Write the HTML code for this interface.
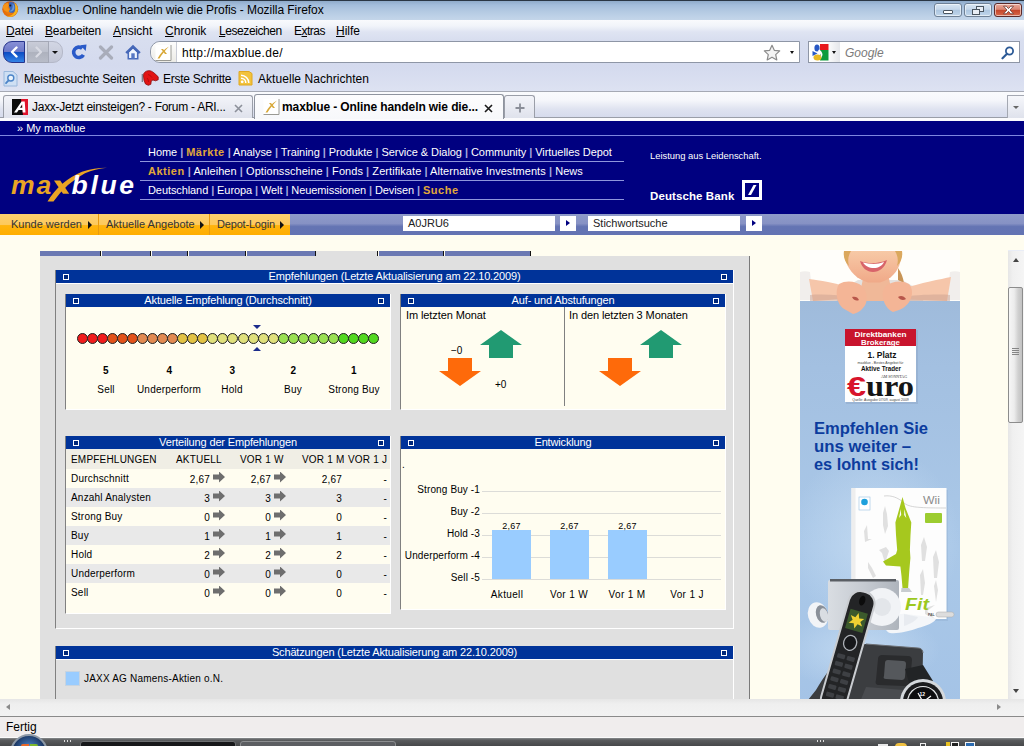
<!DOCTYPE html>
<html lang="de">
<head>
<meta charset="utf-8">
<title>maxblue - Online handeln wie die Profis - Mozilla Firefox</title>
<style>
*{box-sizing:border-box;margin:0;padding:0}
html,body{width:1024px;height:746px;overflow:hidden;background:#e9edf7}
body{position:relative;font-family:"Liberation Sans","DejaVu Sans",sans-serif;font-size:12px;color:#000}
.abs{position:absolute}
.ui{font-family:"DejaVu Sans Condensed","DejaVu Sans","Liberation Sans",sans-serif;font-size:12px;color:#000;white-space:nowrap}
/* ---------- browser chrome ---------- */
#titlebar{left:0;top:0;width:1024px;height:20px;background:linear-gradient(#8fabca 0,#a3bddb 4px,#b3c9e2 10px,#bfd2e8 16px,#c6d7ea 20px);border-top:1px solid #2a3644}
#menubar{left:0;top:20px;width:1024px;height:20px;background:linear-gradient(#f9fafd 0,#f1f4fa 30%,#dfe4f2 60%,#d8deef 100%)}
#navbar{left:0;top:40px;width:1024px;height:26px;background:linear-gradient(#d8deef,#d4daee)}
#bookbar{left:0;top:66px;width:1024px;height:26px;background:linear-gradient(#d4daee,#dde2f2);border-bottom:1px solid #a5a9b4}
#tabbar{left:0;top:92px;width:1024px;height:29px;background:linear-gradient(#fafbfd 0,#f6f7fb 8px,#dfe3f0 17px,#d6dbec 25px)}

#titlebar .ttl{left:27px;top:2px;font-size:12px;line-height:15px;letter-spacing:-0.05px}
.wbtn{top:2px;height:14px;border:1px solid #6f8196;border-radius:3px;background:linear-gradient(#d9e6f3 0,#c5d7ea 45%,#adc6e0 50%,#c0d5ea 100%);box-shadow:inset 0 0 0 1px rgba(255,255,255,.55)}
.wbtn.close{border-color:#5b2a2a;background:linear-gradient(#e9a99b 0,#d98572 45%,#c4452a 50%,#d9694b 100%)}
#menubar span{position:absolute;top:2.5px;line-height:16px;font-size:12px}
#menubar u{text-decoration:underline;text-underline-offset:1px}
#urlbar{left:150px;top:41px;width:650px;height:22px;background:#fff;border:1px solid #8e96a6;border-radius:10px 0 0 10px}
#urlbar .idbox{left:0;top:0;width:26px;height:20px;border-right:1px solid #c9ccd6;border-radius:10px 0 0 10px;background:linear-gradient(#fdfdfd,#ecebe6)}
#searchbar{left:808px;top:41px;width:212px;height:22px;background:#fff;border:1px solid #8e96a6}
#bookbar span{position:absolute;top:5px;line-height:16px;font-size:12px}
.tab{top:3px;height:23px;border:1px solid #9a9ea8;border-bottom:none;border-radius:3px 3px 0 0;background:linear-gradient(#f3f4f9,#dfe2ec)}
.tab.active{top:2px;height:25px;background:linear-gradient(#fdfdfe,#f7f8fb);border-color:#8f949f}
.tab .lbl{position:absolute;top:3px;line-height:16px;font-size:12px;white-space:nowrap}
/* ---------- page ---------- */
#topframe{left:0;top:121px;width:1024px;height:129px;background:#fffdf0}
#hdr{left:0;top:0;width:1024px;height:93px;background:#000080}

.pg{font-family:"Liberation Sans",sans-serif;white-space:nowrap}
#hdr .nav{position:absolute;left:148px;font-size:11px;line-height:13px;color:#fff;letter-spacing:.02px}
#hdr .nav i{font-style:normal;color:#a6aade;font-weight:bold}
#hdr .nav b{color:#e0a83a;letter-spacing:.5px}
#hdr .ln{position:absolute;left:140px;width:484px;height:1px;background:#8f96dc}
#obar{left:0;top:93px;width:290px;height:21px;background:linear-gradient(#fdd070 0,#fdc95c 50%,#ffb40e 55%,#ffae00 100%)}
#obar span{position:absolute;top:3.5px;font-size:11px;line-height:13px;color:#333}
#obar .d{position:absolute;top:0;width:1px;height:21px;background:#e89a10}
#obar .a{position:absolute;top:6.5px;width:0;height:0;border:4px solid transparent;border-left:4.5px solid #111;border-right:none}
#gbar{left:290px;top:93px;width:734px;height:21px;background:linear-gradient(#8e9ac9 0,#8792c4 45%,#6474b3 60%,#6373b3 100%)}
.inp{position:absolute;top:2px;height:15px;background:#fff;font-size:11px;line-height:15px;padding-left:5px;color:#222}
.gobtn{position:absolute;top:2px;width:16px;height:15px;background:#fff}
.gobtn:after{content:"";position:absolute;left:6px;top:4px;border:3.5px solid transparent;border-left:4px solid #000080;border-right:none}
/* main frame */
.tabseg{position:absolute;top:1px;height:5px;background:#6b79b3;border-right:1px solid #111}
#grey{left:40px;top:6px;width:710px;height:443px;background:#e0e0e0;border-right:1px solid #7a7a7a}
.box{position:absolute;border-left:1px solid #808080;border-right:1px solid #fff;border-bottom:1px solid #fff}
.bh{position:absolute;left:0;top:0;right:0;height:13px;background:#003399;color:#fff;font-size:11px;line-height:13px;text-align:center;letter-spacing:-.15px}
.bh:before,.bh:after{content:"";position:absolute;top:4px;width:4px;height:4px;border:1px solid #fff;background:#00287a}
.bh:before{left:7px}.bh:after{right:6px}
.cream{background:#fffdf0}
.t10{font-size:10px;letter-spacing:.2px;line-height:12px;position:absolute}

.dots{position:absolute;left:0;top:39px;height:11px}
.dots i{position:absolute;top:0;width:11px;height:11px;border-radius:50%;border:1px solid #222}
.mk{position:absolute;width:0;height:0;border:4px solid transparent}
.mk.dn{border-top:4.5px solid #1c2c8c;border-bottom:none}
.mk.up{border-bottom:4.5px solid #1c2c8c;border-top:none}
.t10.c{transform:translateX(-50%)}
.tr{position:absolute;left:0;right:0;height:19px;font-size:10px;letter-spacing:.2px}
.tr span{position:absolute;top:4px;line-height:12px}
.tr span.r{top:5px}
.tr .ar{position:absolute;top:2.5px;width:12px;height:11px;background:#6e6e6e;clip-path:polygon(0 27%,50% 27%,50% 0,100% 50%,50% 100%,50% 73%,0 73%)}
#mainframe{left:0;top:250px;width:1008px;height:449px;background:#fffdf0;overflow:hidden}
</style>
</head>
<body>

<div id="titlebar" class="abs">
  <svg class="abs" style="left:1px;top:0px" width="19" height="18" viewBox="0 0 19 18"><defs><radialGradient id="ffg" cx=".45" cy=".55" r=".6"><stop offset="0" stop-color="#f08a14"/><stop offset=".7" stop-color="#e46a0a"/><stop offset="1" stop-color="#b84a0a"/></radialGradient></defs><circle cx="9.200" cy="8.200" r="7.900" fill="url(#ffg)"/><path d="M8.500 1.200c3.500-.6 6.300 1.200 7 4.300.5 2.500-.8 5-3 6-2 .8-4.300.2-5-1.500 1-.3 1.500-1.300 1.200-2.500-.3-1.300-1.300-2-1.200-3.300.1-1.300.5-2.300 1-3z" fill="#3a66b8"/><path d="M11.500 2.500c1.500 1 2.300 3 1.800 5-.4 1.500-1.500 2.600-3 3-1 .2-2-.1-2.500-.8 1.500.2 2.700-.5 3.300-1.800.7-1.700.7-3.700.4-5.400z" fill="#6a9ad8"/><path d="M13.200 1.800c2.500 1.500 3.900 4.200 3.600 7-.4 3.600-3.300 6.500-7 6.900-1.500.1-3-.2-4.200-.9 3.500.6 7-1.300 8.200-4.600.9-2.700.5-5.800-.6-8.400z" fill="#f6b21c"/><path d="M2 5c1-1.800 2.800-3 4.800-3.300L8 4.500 6.500 7l2 1.500-1 2.500c-2 0-4-1-5-2.700C2 7.300 1.800 6 2 5z" fill="#f49418"/><circle cx="9.300" cy="4.600" r="1" fill="#1a1a2a"/></svg>
  <span class="abs ui ttl" style="font-family:'Liberation Sans',sans-serif">maxblue - Online handeln wie die Profis - Mozilla Firefox</span>
  <div class="abs wbtn" style="left:934px;width:28px"><div class="abs" style="left:8px;top:6px;width:10px;height:4px;border:1px solid #4a5560;background:#fff;border-radius:1px"></div></div>
  <div class="abs wbtn" style="left:964px;width:28px"><div class="abs" style="left:11px;top:2px;width:8px;height:6px;border:1px solid #4a5560;background:#e8eef5"></div><div class="abs" style="left:7px;top:5px;width:8px;height:6px;border:1px solid #4a5560;background:#e8eef5"></div></div>
  <div class="abs wbtn close" style="left:994px;width:28px"><svg class="abs" style="left:7px;top:1px" width="13" height="10" viewBox="0 0 13 10"><path d="M1.500 1.200h2.800L6.500 3.600 8.700 1.200h2.800L8 5l3.500 3.800H8.700L6.500 6.400 4.300 8.800H1.500L5 5z" fill="#fff" stroke="#6a3a34" stroke-width=".8"/></svg></div>
</div>
<div id="menubar" class="abs ui" style="font-family:'Liberation Sans',sans-serif">
  <span style="left:6px;letter-spacing:-.15px"><u>D</u>atei</span>
  <span style="left:45px;letter-spacing:-.2px"><u>B</u>earbeiten</span>
  <span style="left:113px"><u>A</u>nsicht</span>
  <span style="left:165px"><u>C</u>hronik</span>
  <span style="left:219px;letter-spacing:-.42px"><u>L</u>esezeichen</span>
  <span style="left:294px;letter-spacing:-.5px">E<u>x</u>tras</span>
  <span style="left:336px"><u>H</u>ilfe</span>
</div>
<div id="navbar" class="abs">
  <div class="abs" style="left:3px;top:1px;width:22px;height:22px;border:1px solid #26348c;border-radius:9px 0 0 9px;background:linear-gradient(#8890d6 0,#6c78c8 48%,#0c4cc4 52%,#3484e6 100%)"><svg class="abs" style="left:5px;top:4px" width="11" height="12" viewBox="0 0 11 12"><path d="M7.500 1.500L3 6l4.500 4.500" fill="none" stroke="#fff" stroke-width="2.400" stroke-linecap="round" stroke-linejoin="round"/></svg></div>
  <div class="abs" style="left:27px;top:1px;width:36px;height:22px;border:1px solid #b4b8c8;border-radius:0 10px 10px 0;background:linear-gradient(#d2d6e4,#c2c6d6)"></div>
  <div class="abs" style="left:27px;top:1px;width:22px;height:22px;border:1px solid #a4a8b6;background:linear-gradient(#c9ccd8 0,#bcc0cc 48%,#aeb2be 52%,#b8bcc8 100%)"><svg class="abs" style="left:5px;top:4px" width="11" height="12" viewBox="0 0 11 12"><path d="M3.500 1.500L8 6l-4.500 4.500" fill="none" stroke="#d9dbe4" stroke-width="2.200" stroke-linecap="round" stroke-linejoin="round"/></svg></div>
  <i class="abs" style="left:52px;top:11px;border:3px solid transparent;border-top:3.500px solid #111;border-bottom:none"></i>
  <svg class="abs" style="left:71px;top:4px" width="17" height="16" viewBox="0 0 17 16"><path d="M12.400 10.800A5.200 5.200 0 1 1 11.200 4.300" fill="none" stroke="#2a5ac8" stroke-width="3.600"/><path d="M9.200 1.200l6.300-.7L14.700 7z" fill="#2a5ac8"/></svg>
  <svg class="abs" style="left:98px;top:5px" width="16" height="15" viewBox="0 0 16 15"><path d="M2.500 2l11 11M13.500 2l-11 11" stroke="#a9adba" stroke-width="3.200" stroke-linecap="round"/></svg>
  <svg class="abs" style="left:125px;top:4px" width="16" height="16" viewBox="0 0 16 16"><path d="M3.300 8v6.700h9.400V8L8 3.500z" fill="#f2f7ff" stroke="#4a6cbc" stroke-width="1.600"/><path d="M.3 8.300L8 .8l7.700 7.500-1.900 1.700L8 4.600 2.200 10z" fill="#4668b8"/><rect x="6.300" y="9.300" width="3.400" height="5.400" fill="#5878c4"/></svg>
</div>
<div id="urlbar" class="abs"><div class="abs idbox"><svg class="abs" style="left:4px;top:2.500px" width="17" height="16" viewBox="0 0 17 16"><rect x=".5" y="0" width="15.500" height="15" fill="#fff"/><path d="M16 0v15.500H.5" fill="none" stroke="#9a9a94" stroke-width="1"/><path d="M2.500 13.500C5.500 8 9 4.500 14 1.500 10.500 5 7 9 4.500 13.500z" fill="#d8a838"/><path d="M6 4l2 0 4 5-2 0z" fill="#d8a838"/></svg></div><span class="abs ui" style="left:31px;top:3.500px;line-height:15px;font-family:'Liberation Sans',sans-serif;letter-spacing:.3px">http://maxblue.de/</span>
  <svg class="abs" style="left:612px;top:2px" width="18" height="17" viewBox="0 0 18 17"><path d="M9 1.300l2.300 5 5.400.6-4 3.700 1.100 5.300L9 13.200l-4.800 2.700 1.100-5.300-4-3.700 5.400-.6z" fill="#f4f4f4" stroke="#8a8a8a" stroke-width="1.200" stroke-linejoin="round"/></svg>
  <i class="abs" style="left:638.500px;top:9px;border:2.500px solid transparent;border-top:3px solid #111;border-bottom:none"></i>
</div>
<div id="searchbar" class="abs"><div class="abs" style="left:0;top:0;width:31px;height:20px;background:linear-gradient(90deg,#fff 0,#fff 55%,#e4e6ea 100%)"></div>
  <svg class="abs" style="left:3px;top:2px" width="17" height="17" viewBox="0 0 17 17"><rect x="8" y="0" width="8.500" height="6" fill="#e8181c"/><rect x="8" y="6" width="8.500" height="10.500" fill="#0c9c3c"/><path d="M8 0h3v6l3 4v6.500H8z" fill="#0c9c3c" opacity="0"/><ellipse cx="5" cy="4" rx="2.600" ry="3.600" fill="#2858c4"/><path d="M.5 7l5 2.500-5 2.500z" fill="#2858c4"/><ellipse cx="5.500" cy="13.500" rx="4" ry="3" fill="#e8b820"/><path d="M7 5.500c2 1 3.500 3 3.500 5.500L9 14c0-3-1-5.500-3-7z" fill="#fff"/></svg>
  <i class="abs" style="left:22.500px;top:9px;border:2.500px solid transparent;border-top:3px solid #111;border-bottom:none"></i>
  <span class="abs ui" style="left:36px;top:3.500px;line-height:15px;font-family:'Liberation Sans',sans-serif;font-style:italic;color:#7a7a7a">Google</span>
  <svg class="abs" style="left:192px;top:3.500px" width="14" height="14" viewBox="0 0 14 14"><circle cx="8.500" cy="5" r="3.600" fill="#fff" stroke="#2c5a96" stroke-width="1.800"/><path d="M6 7.800L1.500 12.300" stroke="#2c5a96" stroke-width="2.200" stroke-linecap="round"/></svg>
</div>
<div id="bookbar" class="abs ui" style="font-family:'Liberation Sans',sans-serif">
  <svg class="abs" style="left:3px;top:4px" width="15" height="17" viewBox="0 0 15 17"><path d="M1 1.500h9l4 3.500v11H1z" fill="#cfe0f4" stroke="#9ab8dc" stroke-width="1"/><circle cx="7.800" cy="8" r="3" fill="#eaf3fc" stroke="#4c84c8" stroke-width="1.400"/><path d="M5.600 10.300L3 13.200" stroke="#4c84c8" stroke-width="1.800" stroke-linecap="round"/></svg>
  <span style="left:24px;letter-spacing:-.18px">Meistbesuchte Seiten</span>
  <svg class="abs" style="left:141px;top:4px" width="18" height="16" viewBox="0 0 18 16"><path d="M2.800 3.500C4 1.500 6.500 .3 9 .8c2 .4 3.500 1.600 5 3l3.200 3v3l-2.700 1-2.500-.8-1.700.8-.5 3.500-2.500 1L4.500 14 3 10.500 2.500 6z" fill="#e21414" stroke="#8c0c0c" stroke-width=".8"/><path d="M7 4.500c1.500.5 3 1.500 4 3M6 8c1 1 1.500 2.500 1.500 4" fill="none" stroke="#a80c0c" stroke-width=".8"/><path d="M1.300 4.500v7" stroke="#111" stroke-width="1.200" stroke-dasharray="1 1"/></svg>
  <span style="left:163px;letter-spacing:-.27px">Erste Schritte</span>
  <svg class="abs" style="left:238px;top:4px" width="15" height="16" viewBox="0 0 15 16"><path d="M1 1.500h10l3 2V15H1z" fill="#f2c23c" stroke="#e0a820" stroke-width="1"/><circle cx="4.200" cy="11.800" r="1.400" fill="#fff"/><path d="M3 8.200a4.800 4.800 0 0 1 4.800 4.800M3 5.200a7.800 7.800 0 0 1 7.800 7.800" fill="none" stroke="#fff" stroke-width="1.500"/></svg>
  <span style="left:258px;letter-spacing:.05px">Aktuelle Nachrichten</span>
</div>
<div id="tabbar" class="abs ui" style="font-family:'Liberation Sans',sans-serif">
  <div class="abs" style="left:0;top:25px;width:1024px;height:1px;background:#9a9ea8"></div>
  <div class="abs" style="left:0;top:26px;width:1024px;height:3px;background:#fbfbfd"></div>
  <div class="abs tab" style="left:3px;width:250px"><svg class="abs" style="left:8px;top:3px" width="16" height="16" viewBox="0 0 16 16"><rect width="16" height="16" fill="#0c0c0c"/><path d="M9 0h7v16h-5z" fill="#e0142c"/><path d="M2 13.500L9.500 2.500h3.200l.8 11h-2.800l-.2-2.600H6.600L5 13.500zM8 8.800h2.400l-.2-3.600z" fill="#fff"/></svg><span class="lbl" style="left:28px;letter-spacing:-.27px">Jaxx-Jetzt einsteigen? - Forum - ARI...</span><svg class="abs" style="left:230px;top:8px" width="9" height="9" viewBox="0 0 9 9"><path d="M1 1l7 7M8 1L1 8" stroke="#8c909a" stroke-width="1.600"/></svg></div>
  <div class="abs tab active" style="left:254px;width:250px"><svg class="abs" style="left:8px;top:4px" width="17" height="16" viewBox="0 0 17 16"><rect x=".5" y="0" width="15.500" height="15" fill="#fff"/><path d="M16 0v15.500H.5" fill="none" stroke="#9a9a94" stroke-width="1"/><path d="M2.500 13.500C5.500 8 9 4.500 14 1.500 10.500 5 7 9 4.500 13.500z" fill="#d8a838"/><path d="M6 4l2 0 4 5-2 0z" fill="#d8a838"/></svg><span class="lbl" style="left:27px;top:4px;font-weight:bold;letter-spacing:-.1px">maxblue - Online handeln wie die...</span><svg class="abs" style="left:229px;top:9px" width="9" height="9" viewBox="0 0 9 9"><path d="M1 1l7 7M8 1L1 8" stroke="#1a1a1a" stroke-width="1.600"/></svg></div>
  <div class="abs tab" style="left:504px;width:31px"><svg class="abs" style="left:10px;top:7px" width="10" height="10" viewBox="0 0 10 10"><path d="M5 .5v9M.5 5h9" stroke="#8a8e98" stroke-width="1.800"/></svg></div>
  <div class="abs" style="left:1007px;top:3px;width:17px;height:23px;border:1px solid #a4a8b2;border-right:none;border-bottom:none;background:linear-gradient(#f6f7fb,#dfe2ec)"><i class="abs" style="left:5px;top:10px;border:3px solid transparent;border-top:3.500px solid #666;border-bottom:none"></i></div>
</div>
<div id="topframe" class="abs pg"><div id="hdr" class="abs">
  <span class="abs" style="left:17px;top:1px;font-size:11px;line-height:13px;color:#fff">» My maxblue</span>
  <div class="abs" style="left:0;top:14px;width:1024px;height:1px;background:#7e86e0"></div>
  <div class="nav" style="top:25px;letter-spacing:-.05px">Home <i>|</i> <b>Märkte</b> <i>|</i> Analyse <i>|</i> Training <i>|</i> Produkte <i>|</i> Service &amp; Dialog <i>|</i> Community <i>|</i> Virtuelles Depot</div>
  <div class="ln" style="top:40px"></div>
  <div class="nav" style="top:44px;letter-spacing:.06px"><b>Aktien</b> <i>|</i> Anleihen <i>|</i> Optionsscheine <i>|</i> Fonds <i>|</i> Zertifikate <i>|</i> Alternative Investments <i>|</i> News</div>
  <div class="ln" style="top:59px"></div>
  <div class="nav" style="top:63px;letter-spacing:-.09px">Deutschland <i>|</i> Europa <i>|</i> Welt <i>|</i> Neuemissionen <i>|</i> Devisen <i>|</i> <b>Suche</b></div>
  <div class="ln" style="top:78px"></div>
  <div class="abs" id="logo" style="left:10px;top:42px;width:126px;height:42px">
    <svg width="126" height="42" viewBox="0 0 126 42" font-family="Liberation Sans, sans-serif" font-style="italic" font-weight="bold" font-size="26.500">
    <text x="1" y="30.800" letter-spacing="2" fill="#e9a424">ma</text>
    <path d="M44 17.500h6.200l9 13.300h-6.200z" fill="#e9a424"/>
    <path d="M37.500 38.500Q50 18 72 8.800 84 4.800 97 4.800 85 6 75 10.300 57 19.500 43.500 38.500z" fill="#e9a424"/>
    <text x="61.500" y="30.800" letter-spacing="2.700" fill="#fff">blue</text></svg>
  </div>
  <span class="abs" style="left:650px;top:29px;font-size:9.400px;line-height:11px;color:#fff">Leistung aus Leidenschaft.</span>
  <span class="abs" style="left:650px;top:68.500px;font-size:11.500px;line-height:13px;font-weight:bold;color:#fff;letter-spacing:.1px">Deutsche Bank</span>
  <div class="abs" style="left:742px;top:59px;width:20px;height:20px;border:3px solid #fff"><svg class="abs" style="left:0;top:0" width="14" height="14" viewBox="0 0 14 14"><path d="M3 12L8.500 2h3L6 12z" fill="#fff"/></svg></div>
</div>
<div id="obar" class="abs">
  <span style="left:11px">Kunde werden</span><i class="a" style="left:88px"></i><i class="d" style="left:98px"></i>
  <span style="left:106px">Aktuelle Angebote</span><i class="a" style="left:199.500px"></i><i class="d" style="left:209px"></i>
  <span style="left:217px;letter-spacing:-.18px">Depot-Login</span><i class="a" style="left:280px"></i>
</div>
<div id="gbar" class="abs">
  <div class="inp" style="left:113px;width:152px">A0JRU6</div><div class="gobtn" style="left:270px"></div>
  <div class="inp" style="left:298px;width:152px">Stichwortsuche</div><div class="gobtn" style="left:456px"></div>
</div>
</div>
<div id="mainframe" class="abs pg">
  <div class="tabseg" style="left:40px;width:61px"></div><div class="tabseg" style="left:102px;width:49px"></div><div class="tabseg" style="left:152px;width:36px"></div><div class="tabseg" style="left:189px;width:57px"></div><div class="tabseg" style="left:247px;width:69px"></div><div class="tabseg" style="left:316px;width:62px;background:#e0e0e0"></div><div class="tabseg" style="left:379px;width:65px"></div><div class="tabseg" style="left:445px;width:86px"></div>
<div id="ad" class="abs" style="left:800px;top:0;width:160px;height:449px;overflow:hidden">
<svg width="160" height="600" viewBox="0 0 160 600" font-family="Liberation Sans, sans-serif">
  <defs>
    <linearGradient id="adbg" x1="0" y1="0" x2="0" y2="1"><stop offset="0" stop-color="#9fbbdb"/><stop offset=".12" stop-color="#a3c0e1"/><stop offset=".45" stop-color="#aac8e8"/><stop offset=".75" stop-color="#a4c3e6"/><stop offset="1" stop-color="#a9c9ea"/></linearGradient>
    <radialGradient id="adgl" cx=".5" cy=".5" r=".5"><stop offset="0" stop-color="#c4dbf2" stop-opacity=".9"/><stop offset="1" stop-color="#c4dbf2" stop-opacity="0"/></radialGradient>
    <linearGradient id="skin" x1="0" y1="0" x2="0" y2="1"><stop offset="0" stop-color="#f7c9a6"/><stop offset="1" stop-color="#f0a988"/></linearGradient>
    <linearGradient id="ipod" x1="0" y1="0" x2="1" y2="0"><stop offset="0" stop-color="#d9dde2"/><stop offset=".5" stop-color="#c6cbd2"/><stop offset="1" stop-color="#aeb4bc"/></linearGradient>
  </defs>
  <rect x="0" y="0" width="160" height="52" fill="#fffdf4"/>
  <!-- woman -->
  <rect x="0" y="0" width="160" height="52" fill="#fffefa"/>
  <path d="M58 30l-14 8-8 14h88l-8-14-14-8z" fill="#e4e2e0"/>
  <path d="M64 24h24l3 14-6 14H66l-5-14z" fill="#f0b898"/>
  <path d="M45 1h56v7c-1 10-7 19-17 23l-4 1.500H68L64 31C54 27 47 18 45 8z" fill="url(#skin)"/>
  <path d="M44 1h7c-3 5-3.500 10-2 15-4-4-6-9-5-15zM95 1h7c1 6-1 11-5 15 1.500-5 1-10-2-15z" fill="#dba85e"/>
  <path d="M98 18c3 4 5 9 6 15l-6-3z" fill="#c89455"/>
  <path d="M60 11c8 3 18 3 27-1-2 8-8 12-14 12-6 0-11-4-13-11z" fill="#d8646a"/>
  <path d="M63 12.500c7 2 15 2 21-.5-2 4-6 6-10 6-5 0-9-2-11-5.500z" fill="#fff"/>
  <path d="M0 22c3-1 7-1 10 0l3 28H0z" fill="#f1eeec"/><path d="M160 22c-3-1-7-1-10 0l-3 28h13z" fill="#f1eeec"/>
  <path d="M9 29c10 1 26 4 44 9l6 10-46 3z" fill="#f6c6aa"/><path d="M151 27c-10 2-30 6-50 12l-6 10 52 2z" fill="#f6c6aa"/>
  <path d="M10 45c12-1 30 0 44 2v5H10z" fill="#c9a090" opacity=".5"/><path d="M150 45c-12-1-34 0-50 2v5h50z" fill="#c9a090" opacity=".5"/>
  <rect x="0" y="51" width="160" height="549" fill="url(#adbg)"/>
  <ellipse cx="75" cy="290" rx="85" ry="95" fill="url(#adgl)"/>
  <ellipse cx="60" cy="400" rx="80" ry="40" fill="url(#adgl)"/>
  <!-- fists -->
  <path d="M39 34c7-4 17-3 23 2 4 4 6 11 4 17-2 6-8 10-13 11l-7-4c-5-2-8-7-9-13-1-5 0-10 2-13z" fill="#f4b596"/>
  <path d="M52 47c3-1 6 0 7 3-2 1-5 1-7-3z" fill="#b8564a"/>
  <path d="M86 36c6-5 16-6 23-2 3 3 4 9 2 14-2 6-7 10-12 12l-6 2c-5-2-9-8-10-14-1-5 0-9 3-12z" fill="#f4b596"/>
  <path d="M98 47c3-2 6-1 8 2-3 2-6 1-8-2z" fill="#b8564a"/>
  <!-- badge -->
  <rect x="46" y="80" width="72" height="74" fill="#8da6c6" opacity=".5"/>
  <rect x="45" y="79" width="71" height="73" fill="#fff"/>
  <rect x="45" y="79" width="71" height="17" fill="#c8142d"/>
  <g text-anchor="middle" font-weight="bold">
    <text x="80.500" y="86.500" font-size="7.500" fill="#fff" textLength="52" lengthAdjust="spacingAndGlyphs">Direktbanken</text>
    <text x="80.500" y="94.500" font-size="7.500" fill="#fff" textLength="39" lengthAdjust="spacingAndGlyphs">Brokerage</text>
    <text x="82" y="108" font-size="9" fill="#111" textLength="29" lengthAdjust="spacingAndGlyphs">1. Platz</text>
    <text x="80.500" y="113.500" font-size="3.500" font-weight="normal" fill="#444">maxblue - Bestes Angebot für</text>
    <text x="81" y="121" font-size="7" fill="#111" textLength="40" lengthAdjust="spacingAndGlyphs">Aktive Trader</text>
    <text x="94" y="128" font-size="4" font-weight="normal" fill="#333" font-family="Liberation Serif, serif">AM SONNTAG</text>
    <text x="80.500" y="151" font-size="3.500" font-weight="normal" fill="#444">Quelle: Ausgabe 07/09, august 2009</text>
  </g>
  <text x="47" y="146" font-size="27" font-weight="bold" fill="#d8142c" textLength="19" lengthAdjust="spacingAndGlyphs">€</text>
  <text x="66" y="145.500" font-size="30" font-weight="bold" fill="#151515" font-family="Liberation Serif, serif" textLength="48" lengthAdjust="spacingAndGlyphs">uro</text>
  <!-- headline -->
  <g font-size="16" font-weight="bold" fill="#0c3c9e"><text x="14" y="183.500" textLength="114" lengthAdjust="spacingAndGlyphs">Empfehlen Sie</text><text x="14" y="201.500" textLength="97" lengthAdjust="spacingAndGlyphs">uns weiter –</text><text x="14" y="219.500" textLength="105" lengthAdjust="spacingAndGlyphs">es lohnt sich!</text></g>
  <!-- wii fit box -->
  <rect x="53" y="240" width="95" height="131" fill="#8ca8cc" opacity=".35"/>
  <rect x="51.500" y="238" width="95" height="131" fill="#fdfdfd"/>
  <rect x="51.500" y="238" width="4" height="131" fill="#eeeeee"/>
  <path d="M84 246c8-1 14 2 19 6 5 5 12 6 43 6" fill="none" stroke="#c4c4c4" stroke-width=".7"/>
  <text x="123" y="254" font-size="10" fill="#8c8c8c" textLength="17" lengthAdjust="spacingAndGlyphs">Wii</text>
  <rect x="59" y="247" width="11" height="13" fill="#fff" stroke="#9cc4e4" stroke-width=".6"/><circle cx="64.500" cy="252" r="3.300" fill="#1ea0dc"/>
  <rect x="125" y="263" width="17" height="10" rx="1" fill="#9ccc30"/>
  <g fill="#e0e0e0"><path d="M83 263l2-7 2 8 1 12-3 8-2-9zM64 281l3-6 1 14h4l-7 3zM79 300l7-3 3 4-4 12-3-10zM68 312l4 6 4 8-3 2-5-10zM121 295l3-8 3 10-2 14h-3zM133 307l3-7 3 12-2 16h-3zM120 325l3-6 2 14-2 12h-2zM134 336l2-6 2 10-2 12zM66 337l3-5 2 12-3 10zM125 358l10-3-8 6 8 8-10-5z"/></g>
  <path d="M102.500 247L105.500 258 111.300 272.500 110.500 285 109.900 300 110.400 308 109.200 322 108.100 338 102.500 338 101.500 326 100.400 316.400 86 315.500 83 311.500 96 304 97.200 300 96 285 95.400 272.500 99.500 258Z" fill="#a6c81e"/><path d="M100.800 259l-1.800 9 2.200-3zM104.500 259l1.800 9-2.200-3z" fill="#fdfdfd"/>
  <path d="M101.500 338h7.500l3 4h-11z" fill="#c8ccd0"/>
  <!-- right earbuds -->
  <path d="M86 372c5-6 14-9 20-8l16 2c6 1 12 1 14 3-2 4-10 7-18 9-8 3-20 6-28 5-4-1-6-6-4-11z" fill="#f4f6f9"/>
  <path d="M104 364l14 3c-2 4-8 7-14 9z" fill="#dfe4ea" opacity=".6"/>
  <text x="105" y="360" font-size="17" font-weight="bold" font-style="italic" fill="#9cc81e" textLength="24" lengthAdjust="spacingAndGlyphs">Fit</text>
  <text x="128" y="366" font-size="3.500" font-weight="bold" fill="#555">PAL</text><rect x="136" y="362" width="18" height="5" rx="2.500" fill="#ddd" stroke="#aaa" stroke-width=".5"/>
  <!-- left earbud -->
  <ellipse cx="18" cy="365" rx="10" ry="13" fill="#f2f4f7" transform="rotate(-15 18 365)"/><ellipse cx="22" cy="364" rx="6" ry="9" fill="#8a9099" transform="rotate(-15 22 364)"/><ellipse cx="24" cy="365" rx="4" ry="7" fill="#d9dde2" transform="rotate(-15 24 365)"/>
  <!-- ipod shuffle -->
  <rect x="28" y="330" width="71" height="50" rx="2" fill="url(#ipod)"/><rect x="30" y="329" width="66" height="2.500" fill="#5a5e64"/>
  <circle cx="82" cy="357" r="19" fill="#f1f3f6"/><circle cx="82" cy="357" r="9" fill="#e3e6ea"/>
  <!-- phone base -->
  <path d="M66 394l52 4c3 0 5 2 5 5l-1 47H8l8-10c8-14 20-30 32-40 5-4 11-6 18-6z" fill="#3b3d40"/>
  <path d="M66 394l52 4c3 0 5 2 5 5" fill="none" stroke="#6c6f74" stroke-width="1"/>
  <path d="M82 405l26 1c3 0 4 2 4 4l-2 22c0 2-2 4-5 4l-26-1c-3 0-4-2-3-5l2-21c0-3 2-4 4-4z" fill="#2a2b2d"/>
  <path d="M88 410l15 1c2 0 3 1 3 3l-1 13c0 2-2 3-3 3l-16-1c-2 0-3-1-2-3l1-13c0-2 1-3 3-3z" fill="#55585c"/>
  <path d="M66 437l38 3-2 12H60z" fill="#4a4c50"/>
  <!-- handset -->
  <g transform="translate(3 0) rotate(16 62 341)"><rect x="48" y="341" width="28" height="125" rx="12" fill="#c9ccd0"/><rect x="50" y="343" width="24" height="122" rx="10.500" fill="#232426"/>
    <ellipse cx="62" cy="351" rx="3" ry="5" fill="#0c0c0c"/><rect x="53" y="362" width="18" height="20" fill="#3c5a2c"/><path d="M62 364l2 5 5-1-3 4 3 4-5-1-2 5-2-5-5 1 3-4-3-4 5 1z" fill="#f0d232"/>
    <ellipse cx="62" cy="395" rx="6.500" ry="7.500" fill="#16171a" stroke="#aeb2b8" stroke-width="1.300"/>
    <g fill="#3e4044"><rect x="53" y="408" width="8" height="4.500" rx="1"/><rect x="63" y="408" width="8" height="4.500" rx="1"/><rect x="53" y="416" width="8" height="4.500" rx="1"/><rect x="63" y="416" width="8" height="4.500" rx="1"/><rect x="53" y="424" width="8" height="4.500" rx="1"/><rect x="63" y="424" width="8" height="4.500" rx="1"/><rect x="53" y="432" width="8" height="4.500" rx="1"/><rect x="63" y="432" width="8" height="4.500" rx="1"/><rect x="53" y="440" width="8" height="4.500" rx="1"/><rect x="63" y="440" width="8" height="4.500" rx="1"/><rect x="53" y="448" width="8" height="4.500" rx="1"/><rect x="63" y="448" width="8" height="4.500" rx="1"/></g>
  </g>
  <!-- watch -->
  <path d="M105 419l18-4 10 16-22 8z" fill="#222426"/>
  <circle cx="123" cy="452" r="23" fill="#d4d8dc"/><circle cx="123" cy="452" r="20" fill="#1b1c1e"/><circle cx="123" cy="452" r="15.500" fill="none" stroke="#e6e8ea" stroke-width="1.200"/><circle cx="123" cy="452" r="14" fill="#0e0e10"/>
  <path d="M123 452l-5-9M123 452l8-6" stroke="#fff" stroke-width="1.200"/>
  <text x="119.500" y="446" font-size="5" fill="#fff" font-weight="bold">12</text>
</svg></div>
  <div id="grey" class="abs">
    <!-- outer box 1 : page x 55..734, y 269..628 ; grey origin = (40,256) -->
    <div class="box" style="left:15px;top:14px;width:679px;height:359px"><div class="bh" style="letter-spacing:-.15px">Empfehlungen (Letzte Aktualisierung am 22.10.2009)</div><div class="abs" style="left:0;right:0;top:13px;height:1px;background:#fff"></div>
      <!-- inner origin = page (56,270) -->
      <div class="box cream" id="b1" style="left:9px;top:24px;width:326px;height:116px"><div class="bh">Aktuelle Empfehlung (Durchschnitt)</div>
        <div class="dots"><i style="left:10.7px;background:#f01c1c"></i><i style="left:20.8px;background:#f01c1c"></i><i style="left:30.8px;background:#f01c1c"></i><i style="left:40.9px;background:#e2521a"></i><i style="left:50.9px;background:#e2521a"></i><i style="left:60.9px;background:#e2521a"></i><i style="left:71.0px;background:#e28a52"></i><i style="left:81.1px;background:#e28a52"></i><i style="left:91.1px;background:#e28a52"></i><i style="left:101.2px;background:#e28a52"></i><i style="left:111.2px;background:#e2c244"></i><i style="left:121.2px;background:#e2c244"></i><i style="left:131.3px;background:#e2c244"></i><i style="left:141.4px;background:#e0e07c"></i><i style="left:151.4px;background:#e0e07c"></i><i style="left:161.4px;background:#e0e07c"></i><i style="left:171.5px;background:#e0e07c"></i><i style="left:181.6px;background:#e0e07c"></i><i style="left:191.6px;background:#e0e07c"></i><i style="left:201.7px;background:#e0e07c"></i><i style="left:211.7px;background:#9ae052"></i><i style="left:221.8px;background:#9ae052"></i><i style="left:231.8px;background:#9ae052"></i><i style="left:241.9px;background:#9ae052"></i><i style="left:251.9px;background:#9ae052"></i><i style="left:262.0px;background:#9ae052"></i><i style="left:272.0px;background:#52d820"></i><i style="left:282.1px;background:#52d820"></i><i style="left:292.1px;background:#52d820"></i><i style="left:302.2px;background:#52d820"></i></div>
        <i class="mk dn" style="left:186.500px;top:31px"></i><i class="mk up" style="left:186.500px;top:52.500px"></i>
        <b class="t10 c" style="left:40px;top:71px">5</b><b class="t10 c" style="left:103.500px;top:71px">4</b><b class="t10 c" style="left:166.500px;top:71px">3</b><b class="t10 c" style="left:227.500px;top:71px">2</b><b class="t10 c" style="left:288px;top:71px">1</b>
        <span class="t10 c" style="left:40px;top:89.5px">Sell</span><span class="t10 c" style="left:103px;top:89.5px">Underperform</span><span class="t10 c" style="left:166px;top:89.5px">Hold</span><span class="t10 c" style="left:227px;top:89.5px">Buy</span><span class="t10 c" style="left:288px;top:89.5px">Strong Buy</span>
      </div>
      <div class="box cream" id="b2" style="left:344px;top:24px;width:326px;height:116px"><div class="bh">Auf- und Abstufungen</div>
        <span class="abs" style="left:5px;top:15px;font-size:11px;line-height:13px;letter-spacing:-.1px">Im letzten Monat</span>
        <span class="abs" style="left:168px;top:15px;font-size:11px;line-height:13px;letter-spacing:-.1px">In den letzten 3 Monaten</span>
        <div class="abs" style="left:163px;top:13px;width:1px;height:99px;background:#808080"></div>
        <svg class="abs" style="left:0;top:15px" width="324" height="102" viewBox="0 0 324 102">
          <path d="M100 21l21 15h-9v13h-24v-13h-9z" fill="#219a72"/><path d="M260 21l21 15h-9v13h-24v-13h-9z" fill="#219a72"/>
          <path d="M47 49h24v13h9l-21 15-21-15h9z" fill="#fe6a0a"/><path d="M207 49h24v13h9l-21 15-21-15h9z" fill="#fe6a0a"/>
        </svg>
        <span class="t10" style="left:50px;top:50.500px;letter-spacing:0">−0</span><span class="t10" style="left:94px;top:85px;letter-spacing:0">+0</span>
      </div>
      <div class="box cream" id="b3" style="left:9px;top:166px;width:326px;height:178px"><div class="bh">Verteilung der Empfehlungen</div>
        <div class="tr" style="top:13px;height:20px;background:#f0eee5"><span style="left:5px;top:4.500px">EMPFEHLUNGEN</span><span style="left:110px;top:4.500px">AKTUELL</span><span style="left:174px;top:4.500px">VOR 1 W</span><span style="left:236px;top:4.500px">VOR 1 M</span><span style="left:282px;top:4.500px">VOR 1 J</span></div>
        <div class="tr" style="top:33px;background:#fffdf0"><span style="left:5px">Durchschnitt</span><span class="r" style="right:180px">2,67</span><b class="ar" style="left:147px"></b><span class="r" style="right:119px">2,67</span><b class="ar" style="left:208px"></b><span class="r" style="right:48px">2,67</span><span class="r" style="right:3px">-</span></div><div class="tr" style="top:52px;background:#e9e9e9"><span style="left:5px">Anzahl Analysten</span><span class="r" style="right:180px">3</span><b class="ar" style="left:147px"></b><span class="r" style="right:119px">3</span><b class="ar" style="left:208px"></b><span class="r" style="right:48px">3</span><span class="r" style="right:3px">-</span></div><div class="tr" style="top:71px;background:#fffdf0"><span style="left:5px">Strong Buy</span><span class="r" style="right:180px">0</span><b class="ar" style="left:147px"></b><span class="r" style="right:119px">0</span><b class="ar" style="left:208px"></b><span class="r" style="right:48px">0</span><span class="r" style="right:3px">-</span></div><div class="tr" style="top:90px;background:#e9e9e9"><span style="left:5px">Buy</span><span class="r" style="right:180px">1</span><b class="ar" style="left:147px"></b><span class="r" style="right:119px">1</span><b class="ar" style="left:208px"></b><span class="r" style="right:48px">1</span><span class="r" style="right:3px">-</span></div><div class="tr" style="top:109px;background:#fffdf0"><span style="left:5px">Hold</span><span class="r" style="right:180px">2</span><b class="ar" style="left:147px"></b><span class="r" style="right:119px">2</span><b class="ar" style="left:208px"></b><span class="r" style="right:48px">2</span><span class="r" style="right:3px">-</span></div><div class="tr" style="top:128px;background:#e9e9e9"><span style="left:5px">Underperform</span><span class="r" style="right:180px">0</span><b class="ar" style="left:147px"></b><span class="r" style="right:119px">0</span><b class="ar" style="left:208px"></b><span class="r" style="right:48px">0</span><span class="r" style="right:3px">-</span></div><div class="tr" style="top:147px;background:#fffdf0"><span style="left:5px">Sell</span><span class="r" style="right:180px">0</span><b class="ar" style="left:147px"></b><span class="r" style="right:119px">0</span><b class="ar" style="left:208px"></b><span class="r" style="right:48px">0</span><span class="r" style="right:3px">-</span></div>
      </div>
      <div class="box cream" id="b4" style="left:344px;top:166px;width:326px;height:174px"><div class="bh">Entwicklung</div>
        <span class="t10" style="left:1px;top:23px">.</span>
        <svg class="abs" style="left:0;top:13px" width="324" height="160" viewBox="0 0 324 160" font-family="Liberation Sans, sans-serif" font-size="10">
          <g stroke="#dcdcd8" stroke-width="1"><path d="M81 42.500h239M81 64.500h239M81 86.500h239M81 108.500h239M81 130.500h239"/></g>
          <g fill="#99ccff"><rect x="91" y="81" width="39" height="49"/><rect x="149" y="81" width="39" height="49"/><rect x="207" y="81" width="39" height="49"/></g>
          <g text-anchor="end" letter-spacing=".12"><text x="79" y="44">Strong Buy -1</text><text x="79" y="66">Buy -2</text><text x="79" y="88">Hold -3</text><text x="79" y="110">Underperform -4</text><text x="79" y="132">Sell -5</text></g>
          <g text-anchor="middle" font-size="9" letter-spacing=".3"><text x="110.500" y="80">2,67</text><text x="168.500" y="80">2,67</text><text x="226.500" y="80">2,67</text></g>
          <g text-anchor="middle" letter-spacing=".35"><text x="106" y="149">Aktuell</text><text x="168" y="149">Vor 1 W</text><text x="226" y="149">Vor 1 M</text><text x="286" y="149">Vor 1 J</text></g>
        </svg>
      </div>
    </div>
    <div class="box" style="left:15px;top:390px;width:679px;height:60px;border-bottom:none"><div class="bh" style="letter-spacing:-.15px">Schätzungen (Letzte Aktualisierung am 22.10.2009)</div><div class="abs" style="left:0;right:0;top:13px;height:1px;background:#fff"></div>
      <div class="abs" style="left:9px;top:25px;width:15px;height:15px;background:#99ccff;border:1px solid #c8d4e0"></div>
      <span class="t10" style="left:28px;top:27px">JAXX AG Namens-Aktien o.N.</span>
    </div>
  </div>
</div>

<div id="vscroll" class="abs" style="left:1008px;top:251px;width:16px;height:448px;background:linear-gradient(90deg,#e6e6e6,#f0f0f0 30%,#f5f5f5)">
  <i class="abs" style="left:4.500px;top:7px;border:3.500px solid transparent;border-bottom:4.500px solid #444;border-top:none"></i>
  <div class="abs" style="left:0;top:36px;width:15px;height:136px;border:1px solid #8c8c8c;border-radius:2px;background:linear-gradient(90deg,#f6f6f6 0,#ececec 40%,#d0d0d0 70%,#c2c2c2 100%)"><div class="abs" style="left:3px;top:60px;width:7px;height:8px;background:repeating-linear-gradient(#858585 0 1px,transparent 1px 2px)"></div></div>
  <i class="abs" style="left:4.500px;top:438px;border:3.500px solid transparent;border-top:4.500px solid #444;border-bottom:none"></i>
</div>
<div id="hscroll" class="abs" style="left:0;top:699px;width:1024px;height:17px;background:linear-gradient(#e6e6e6,#efefef 30%,#f2f2f2)">
  <i class="abs" style="left:6px;top:5px;border:3.500px solid transparent;border-right:4.500px solid #8a8a8a;border-left:none"></i>
  <i class="abs" style="left:997px;top:5px;border:3.500px solid transparent;border-left:4.500px solid #8a8a8a;border-right:none"></i>
</div>
<div id="statusbar" class="abs ui" style="left:0;top:716px;width:1024px;height:22px;background:#f0eded;border-top:1px solid #8a8a8a;border-bottom:1px solid #fafafa;font-family:'Liberation Sans',sans-serif"><span class="abs" style="left:6px;top:3px;line-height:15px">Fertig</span></div>
<div id="taskbar" class="abs" style="left:0;top:738px;width:1024px;height:8px;background:linear-gradient(#8a8c8e 0,#5a5c5e 2px,#46484a 100%)">
  <div class="abs" style="left:10px;top:-4px;width:38px;height:38px;border-radius:50%;background:radial-gradient(circle at 50% 40%,#8ab4dc 0,#3a6aa8 25%,#16305a 60%,#0a1628 100%);border:2px solid #8c98a6"><i class="abs" style="left:9px;top:8px;width:8px;height:8px;background:#e8682a;border-radius:2px 0 0 0"></i><i class="abs" style="left:18px;top:8px;width:8px;height:8px;background:#7cb82c;border-radius:0 2px 0 0"></i></div>
  <div class="abs" style="left:80px;top:3px;width:156px;height:8px;background:#17181a;border:1px solid #6c6e70;border-radius:3px 3px 0 0"></div>
  <div class="abs" style="left:240px;top:3px;width:156px;height:8px;background:#5c5e62;border:1px solid #8c8e90;border-radius:3px 3px 0 0"></div>
  <div class="abs" style="left:64px;top:2px;width:7px;height:2px;background:repeating-linear-gradient(90deg,#ddd 0 1px,transparent 1px 3px)"></div>
  <div class="abs" style="left:817px;top:2px;width:7px;height:2px;background:repeating-linear-gradient(90deg,#ddd 0 1px,transparent 1px 3px)"></div>
  <div class="abs" style="left:878px;top:6px;width:10px;height:3px;background:#e8e8e8"></div><div class="abs" style="left:895px;top:5px;width:12px;height:4px;border-radius:6px 6px 0 0;background:#f0c040"></div><div class="abs" style="left:920px;top:5px;width:6px;height:4px;border:1px solid #eee"></div><div class="abs" style="left:946px;top:4px;width:4px;height:5px;background:#e8c020"></div><div class="abs" style="left:951px;top:4px;width:8px;height:5px;border:1.500px solid #f4f4f4;border-bottom:none;background:#222"></div><div class="abs" style="left:965px;top:4px;width:10px;height:5px;border:1.500px solid #f4f4f4;border-bottom:none;background:#2a6ab0"></div>
</div>
</body>
</html>
